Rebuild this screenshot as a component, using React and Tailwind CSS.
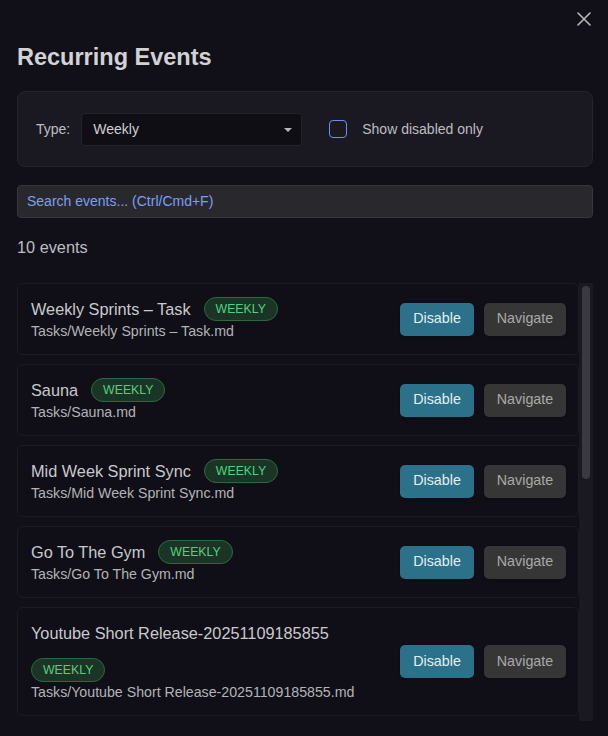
import React from 'react';

const events = [
  { title: 'Weekly Sprints – Task', path: 'Tasks/Weekly Sprints – Task.md' },
  { title: 'Sauna', path: 'Tasks/Sauna.md' },
  { title: 'Mid Week Sprint Sync', path: 'Tasks/Mid Week Sprint Sync.md' },
  { title: 'Go To The Gym', path: 'Tasks/Go To The Gym.md' },
  { title: 'Youtube Short Release-20251109185855', path: 'Tasks/Youtube Short Release-20251109185855.md' },
  { title: 'Team Retro', path: 'Tasks/Team Retro.md' },
  { title: 'Laundry', path: 'Tasks/Laundry.md' },
  { title: 'Weekly Review', path: 'Tasks/Weekly Review.md' },
  { title: 'Grocery Run', path: 'Tasks/Grocery Run.md' },
  { title: 'Call Parents', path: 'Tasks/Call Parents.md' },
];

const EventCard = ({ ev }) => (
  <div className="shrink-0 flex items-center gap-3 rounded-md border border-[#1c1c26] bg-[#100f17] pl-[13px] pr-[12px] py-[13px]">
    <div className="flex-1 min-w-0">
      <div className="flex flex-wrap items-center gap-x-[13px] gap-y-[13px]">
        <span className="text-[16.3px] leading-[24px] text-[#c9c9cc]">{ev.title}</span>
        <span className="rounded-full border border-[#2b6a3c] bg-[#1a3525] px-[11px] h-[24px] flex items-center text-[12.3px] text-[#4fd27f]">
          WEEKLY
        </span>
      </div>
      <div className="text-[14.2px] leading-[20px] text-[#b3b3b6]">{ev.path}</div>
    </div>
    <div className="flex items-center gap-[10px] shrink-0">
      <button className="h-[33px] w-[74px] rounded-[5px] bg-[#2a7189] text-[14.3px] text-[#e6eef2] shadow-sm">
        Disable
      </button>
      <button className="h-[33px] w-[82px] rounded-[5px] bg-[#363636] text-[14.3px] text-[#a9a9a9] shadow-sm">
        Navigate
      </button>
    </div>
  </div>
);

export default function App() {
  return (
    <div
      className="w-[608px] h-[736px] overflow-hidden bg-[#111019] pl-[17px] pr-[15px]"
      style={{ fontFamily: '"Liberation Sans", Arial, sans-serif' }}
    >
      <div className="flex justify-end pt-[9px] -mr-[1px]">
        <button className="w-[20px] h-[20px] flex items-center justify-center text-[#b8b8bc]">
          <svg width="16" height="16" viewBox="0 0 16 16" fill="none" stroke="currentColor" strokeWidth="1.6" strokeLinecap="round">
            <path d="M2 2 L14 14 M14 2 L2 14" />
          </svg>
        </button>
      </div>
      <h1 className="mt-[13px] text-[23.5px] leading-[30px] font-bold text-[#d2d2d4]">Recurring Events</h1>

      <div className="mt-[19px] h-[76px] rounded-[8px] border border-[#25242d] bg-[#1a1921] flex items-center pl-[18px]">
        <span className="text-[14px] text-[#bdbdc0]">Type:</span>
        <div className="ml-[11px] relative w-[221px] h-[33px] rounded-[4px] border border-[#23222b] bg-[#0f0e15] flex items-center pl-[11px]">
          <span className="text-[14px] text-[#cfcfd2]">Weekly</span>
          <span className="absolute right-[9px] top-[14px] w-0 h-0 border-l-[4px] border-r-[4px] border-t-[4px] border-l-transparent border-r-transparent border-t-[#b8b8bc]" />
        </div>
        <div className="ml-[27px] w-[18px] h-[18px] rounded-[4px] border border-[#6b8ff2]" />
        <span className="ml-[15px] text-[14px] text-[#bdbdc0]">Show disabled only</span>
      </div>

      <div className="mt-[18px] h-[33px] rounded-[4px] border border-[#36363b] bg-[#29292d] flex items-center pl-[9px]">
        <span className="text-[14px] text-[#7b9ef5]">Search events... (Ctrl/Cmd+F)</span>
      </div>

      <div className="mt-[18px] text-[16.3px] leading-[22px] text-[#bdbdc0]">10 events</div>

      <div className="mt-[25px] h-[438px] flex">
        <div className="flex-1 min-w-0 overflow-hidden flex flex-col gap-[9px]">
          {events.map((ev, i) => (
            <EventCard key={i} ev={ev} />
          ))}
        </div>
        <div className="w-[14px] shrink-0 bg-[#1a1921] pt-[3px] flex justify-center">
          <div className="w-[8px] h-[193px] rounded-full bg-[#3a3942]" />
        </div>
      </div>
    </div>
  );
}
